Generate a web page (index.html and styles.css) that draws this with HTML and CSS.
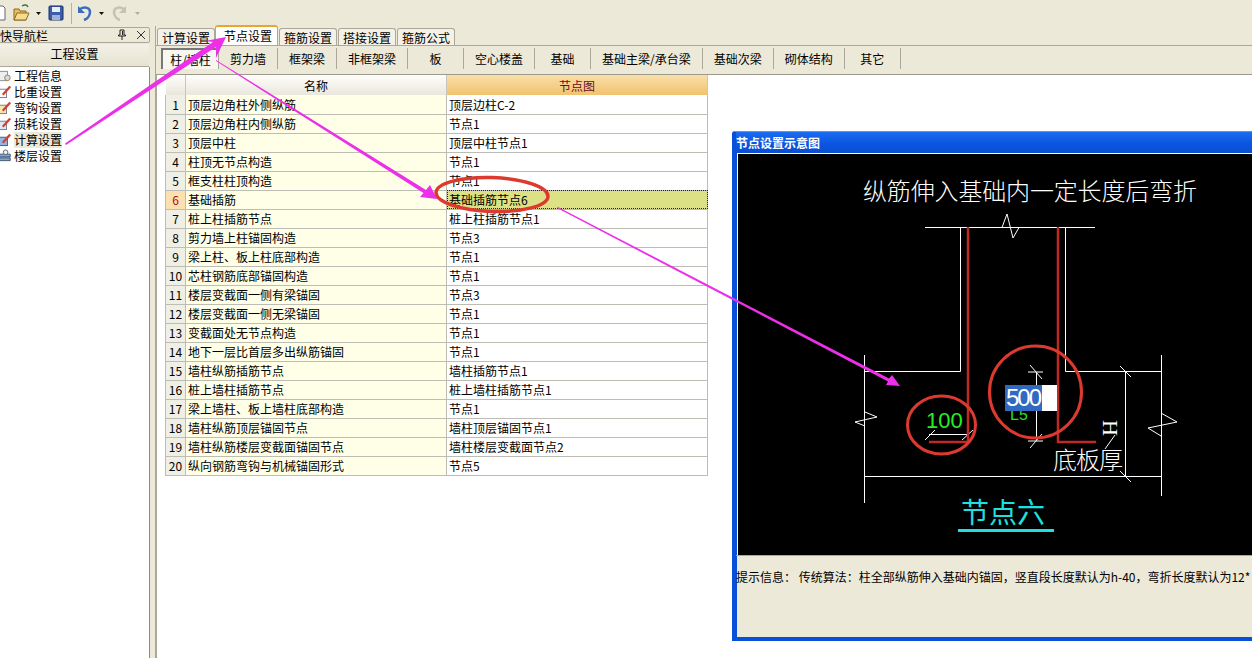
FILE: index.html
```html
<!DOCTYPE html>
<html lang="zh-CN">

<head>
  <meta charset="UTF-8">
  <title>节点设置</title>
  <link rel="stylesheet" href="styles.css">
</head>

<body>
  <div class="toolbar">
    <svg class="tool-icons" width="150" height="26" viewBox="0 0 150 26">
      <!-- new, clipped by the window edge -->
      <path d="M-4 6h7l2 2v12h-9z" fill="#fff" stroke="#667" />
      <!-- open -->
      <path d="M14 9h5l1 2h6v9H14z" fill="#e8bd5a" stroke="#8a6a20" />
      <path d="M14 20l3-7h12l-3 7z" fill="#f6dc8c" stroke="#8a6a20" />
      <path d="M22 6c3-2 5-1 6 1" fill="none" stroke="#3c7a2c" stroke-width="1.5" />
      <path d="M36 12h5l-2.500 3z" fill="#111" />
      <!-- save -->
      <rect x="49" y="6" width="14" height="14" rx="1" fill="#3c5ea8" stroke="#1d2f6a" />
      <rect x="52" y="7" width="8" height="5" fill="#e8eefa" />
      <rect x="52" y="15" width="8" height="5" fill="#9fb2d8" />
      <path d="M71.500 3v21" stroke="#b5b29f" />
      <!-- undo -->
      <path d="M80 9c5-3 10-1 10 3s-3 7-6 8" fill="none" stroke="#3a6cc0" stroke-width="2.500" />
      <path d="M78 6v7h7z" fill="#3a6cc0" />
      <path d="M99 12h5l-2.500 3z" fill="#111" />
      <!-- redo -->
      <path d="M124 9c-5-3-10-1-10 3s3 7 6 8" fill="none" stroke="#c4c2b4" stroke-width="2.500" />
      <path d="M126 6v7h-7z" fill="#c4c2b4" />
      <path d="M135 12h5l-2.500 3z" fill="#b0ae9f" />
    </svg>
  </div>

  <div class="workspace">
    <aside class="nav-panel">
      <div class="nav-title">
        <span class="nav-title-text">快导航栏</span>
        <svg class="pin" width="10" height="12" viewBox="0 0 10 12"><path d="M3 1h4v5h1.500v1h-7V6H3zM5 7v4" fill="none" stroke="#222" /><path d="M5.500 2v4" stroke="#222" /></svg>
        <svg class="close" width="10" height="10" viewBox="0 0 10 10"><path d="M1 1l8 8M9 1l-8 8" stroke="#333" /></svg>
      </div>
      <div class="nav-head">工程设置</div>
      <ul class="nav-list">
        <li class="nav-item"><svg class="nav-icon" viewBox="0 0 14 14"><rect x="-2" y="2" width="10" height="10" fill="#eee" stroke="#889" /><circle cx="8" cy="9" r="3" fill="#cde" stroke="#a67c30" /></svg>工程信息</li>
        <li class="nav-item"><svg class="nav-icon" viewBox="0 0 14 14"><rect x="-2" y="4" width="9" height="9" fill="#fff" stroke="#778" /><path d="M3 10L11 1" stroke="#d8402c" stroke-width="2.500" /></svg>比重设置</li>
        <li class="nav-item"><svg class="nav-icon" viewBox="0 0 14 14"><rect x="-2" y="4" width="9" height="9" fill="#f6e8b0" stroke="#778" /><path d="M3 10L11 1" stroke="#d8402c" stroke-width="2.500" /></svg>弯钩设置</li>
        <li class="nav-item"><svg class="nav-icon" viewBox="0 0 14 14"><rect x="-2" y="4" width="9" height="9" fill="#dfe8f6" stroke="#778" /><path d="M3 10L11 1" stroke="#d8402c" stroke-width="2.500" /></svg>损耗设置</li>
        <li class="nav-item nav-item-on"><svg class="nav-icon" viewBox="0 0 14 14"><rect x="-2" y="4" width="10" height="9" fill="#8fb6e6" stroke="#556" /><path d="M3 10L11 1" stroke="#d8402c" stroke-width="2.500" /></svg><span>计算设置</span></li>
        <li class="nav-item"><svg class="nav-icon" viewBox="0 0 14 14"><path d="M-2 5h13v3H-2zM-2 9h13v3H-2z" fill="#7ea4d8" stroke="#456" /><circle cx="6" cy="3" r="2.500" fill="#e8eef6" stroke="#567" /></svg>楼层设置</li>
      </ul>
    </aside>

    <div class="splitter"></div>

    <main class="main">
      <div class="tabs">
        <div class="tab">计算设置</div>
        <div class="tab tab-on">节点设置</div>
        <div class="tab">箍筋设置</div>
        <div class="tab">搭接设置</div>
        <div class="tab">箍筋公式</div>
      </div>

      <div class="tab-body">
        <div class="subtabs">
          <div class="subtab subtab-on">柱/墙柱</div>
          <div class="subtab">剪力墙</div>
          <div class="subtab">框架梁</div>
          <div class="subtab">非框架梁</div>
          <div class="subtab">板</div>
          <div class="subtab">空心楼盖</div>
          <div class="subtab">基础</div>
          <div class="subtab">基础主梁/承台梁</div>
          <div class="subtab">基础次梁</div>
          <div class="subtab">砌体结构</div>
          <div class="subtab">其它</div>
        </div>

        <table class="grid">
          <thead>
            <tr>
              <th class="col-no"></th>
              <th class="col-name">名称</th>
              <th class="col-node">节点图</th>
            </tr>
          </thead>
          <tbody>
            <tr><td class="no">1</td><td class="name">顶层边角柱外侧纵筋</td><td>顶层边柱C-2</td></tr>
            <tr><td class="no">2</td><td class="name">顶层边角柱内侧纵筋</td><td>节点1</td></tr>
            <tr><td class="no">3</td><td class="name">顶层中柱</td><td>顶层中柱节点1</td></tr>
            <tr><td class="no">4</td><td class="name">柱顶无节点构造</td><td>节点1</td></tr>
            <tr><td class="no">5</td><td class="name">框支柱柱顶构造</td><td>节点1</td></tr>
            <tr><td class="no no-on">6</td><td class="name">基础插筋</td><td class="cell-on">基础插筋节点6</td></tr>
            <tr><td class="no">7</td><td class="name">桩上柱插筋节点</td><td>桩上柱插筋节点1</td></tr>
            <tr><td class="no">8</td><td class="name">剪力墙上柱锚固构造</td><td>节点3</td></tr>
            <tr><td class="no">9</td><td class="name">梁上柱、板上柱底部构造</td><td>节点1</td></tr>
            <tr><td class="no">10</td><td class="name">芯柱钢筋底部锚固构造</td><td>节点1</td></tr>
            <tr><td class="no">11</td><td class="name">楼层变截面一侧有梁锚固</td><td>节点3</td></tr>
            <tr><td class="no">12</td><td class="name">楼层变截面一侧无梁锚固</td><td>节点1</td></tr>
            <tr><td class="no">13</td><td class="name">变截面处无节点构造</td><td>节点1</td></tr>
            <tr><td class="no">14</td><td class="name">地下一层比首层多出纵筋锚固</td><td>节点1</td></tr>
            <tr><td class="no">15</td><td class="name">墙柱纵筋插筋节点</td><td>墙柱插筋节点1</td></tr>
            <tr><td class="no">16</td><td class="name">桩上墙柱插筋节点</td><td>桩上墙柱插筋节点1</td></tr>
            <tr><td class="no">17</td><td class="name">梁上墙柱、板上墙柱底部构造</td><td>节点1</td></tr>
            <tr><td class="no">18</td><td class="name">墙柱纵筋顶层锚固节点</td><td>墙柱顶层锚固节点1</td></tr>
            <tr><td class="no">19</td><td class="name">墙柱纵筋楼层变截面锚固节点</td><td>墙柱楼层变截面节点2</td></tr>
            <tr><td class="no">20</td><td class="name">纵向钢筋弯钩与机械锚固形式</td><td>节点5</td></tr>
          </tbody>
        </table>
      </div>
    </main>
  </div>

  <section class="dialog">
    <div class="dialog-title">节点设置示意图</div>
    <!-- viewBox uses page coordinates so the drawing can be read against the screenshot -->
    <svg class="diagram" viewBox="738 154 520 401" width="520" height="401">
      <text class="cad-text" x="863" y="200" textLength="334">纵筋伸入基础内一定长度后弯折</text>

      <g class="cad-line">
        <path d="M925 227.500H1095" />
        <path d="M1002 227.500L1007 214L1013 238L1019 227.500" />
        <path d="M960.500 227V371.500H865M1065.500 227V371.500H1161.500" />
        <path d="M864.500 355V503M1161.500 355V496M865 476.500H1161" />
        <path d="M865 412L877 417L855 422L865 426" />
        <path d="M1161 413L1177 422L1148 428L1161 436" />
        <path d="M1125.500 371V476M1120 366L1131 377M1120 471L1131 482" />
        <path d="M1036.500 372V441M1028 372H1043M1030 365L1042 379M1028 441H1043M1030 448L1042 434" />
        <path d="M929 434.500H968M925 440L935 430M962 440L973 430" />
        <path d="M1115 435L1105 449" />
      </g>

      <g class="rebar">
        <path d="M968 227V442H929" />
        <path d="M1058 227V442H1096" />
      </g>

      <text class="cad-green" x="926" y="428">100</text>
      <text class="cad-green-small" x="1010" y="420">L5</text>
      <rect x="1005" y="385" width="52" height="26" fill="#fff" />
      <rect x="1005" y="385" width="37" height="26" fill="#3168c0" />
      <text class="cad-input" x="1006" y="406" textLength="36">500</text>
      <text class="cad-h" transform="translate(1103 428) rotate(90)" text-anchor="middle">H</text>
      <text class="cad-text" x="1053" y="469" textLength="70">底板厚</text>
      <text class="cad-title" x="961" y="523" textLength="84">节点六</text>
      <rect x="958" y="529" width="96" height="3" fill="#1fe0e0" />

      <ellipse class="mark" cx="941.500" cy="425" rx="34" ry="29" />
      <ellipse class="mark" cx="1035.500" cy="392" rx="46" ry="46" />
    </svg>
    <div class="dialog-info">提示信息： 传统算法：柱全部纵筋伸入基础内锚固，竖直段长度默认为h-40，弯折长度默认为12*</div>
  </section>

  <svg class="notes" width="1252" height="658" viewBox="0 0 1252 658">
    <ellipse class="mark mark-cell" cx="492" cy="194.500" rx="56" ry="17" transform="rotate(2 492 194.500)" />
    <g class="arrow">
      <polygon points="65,143.500 213,42 205,41 226,37 216,58 216,47 66,145" />
      <polygon points="216,60 426,190 430,185 437,199 420,197 423.500,193 216,61" />
      <polygon points="558,207 889,378.500 892,375 900,386 886,385 888,381.500 557,208" />
    </g>
  </svg>
</body>

</html>
```

FILE: styles.css
```css
* {
  box-sizing: border-box;
}

html,
body {
  margin: 0;
  height: 100%;
}

body {
  position: relative;
  width: 1252px;
  height: 658px;
  overflow: hidden;
  display: flex;
  flex-direction: column;
  background-color: #fff;
  color: #000;
  font-family: "Noto Sans CJK SC", "Liberation Sans", sans-serif;
  font-size: 12px;
}

.toolbar {
  height: 26px;
  flex: none;
  background-color: #ece9d8;
}

.tool-icons {
  display: block;
}

.workspace {
  flex: 1;
  display: flex;
  min-height: 0;
}

/* left panel */
.nav-panel {
  width: 150px;
  flex: none;
  display: flex;
  flex-direction: column;
  background-color: #ece9d8;
}

.nav-title {
  height: 16px;
  margin: 1px 0 1px -2px;
  padding-right: 3px;
  display: flex;
  align-items: center;
  gap: 9px;
  border: 1px solid #aca899;
  border-radius: 2px;
  line-height: 13px;
}

.nav-title-text {
  flex: 1;
  padding-left: 1px;
}

.nav-head {
  height: 23px;
  margin-right: 1px;
  line-height: 20px;
  text-align: center;
  background: linear-gradient(#f3f1e6, #e6e3d2);
  border-bottom: 1px solid #aca899;
}

.nav-list {
  flex: 1;
  list-style: none;
  margin: 0;
  padding: 1px 0 0;
  background-color: #fff;
  border-right: 1px solid #8e8c80;
}

.nav-item {
  height: 16px;
  line-height: 16px;
  display: flex;
  align-items: center;
  gap: 1px;
}

.nav-item-on span {
  background-color: #ece9d8;
}

.nav-icon {
  width: 13px;
  height: 14px;
  flex: none;
}

.splitter {
  width: 6px;
  flex: none;
  background-color: #ece9d8;
  border-right: 1px solid #aca899;
}

/* main area */
.main {
  flex: 1;
  min-width: 0;
  display: flex;
  flex-direction: column;
  background-color: #ece9d8;
}

.tabs {
  height: 19px;
  flex: none;
  display: flex;
  align-items: flex-end;
  gap: 1px;
  padding-left: 1px;
}

.tab {
  height: 17px;
  padding: 0 4px;
  line-height: 18px;
  background-color: #f4f2e8;
  border: 1px solid #aca899;
  border-bottom: 0;
  border-radius: 3px 3px 0 0;
}

.tab-on {
  height: 20px;
  padding: 0 5px 0 8px;
  margin: 0 0 0 -1px;
  line-height: 17px;
  background-color: #fff;
  border-top: 2px solid #eba52c;
  position: relative;
}

.tab-body {
  flex: 1;
  border-left: 1px solid #aca899;
  border-top: 1px solid #aca899;
  padding: 0 0 0 4px;
  background-color: #fff;
}

.subtabs {
  height: 29px;
  margin: 0 0 0 -5px;
  padding-left: 5px;
  display: flex;
  align-items: stretch;
  background-color: #ece9d8;
  border-bottom: 1px solid #9c9a8c;
  width: 1097px;
}

.subtab {
  min-width: 56px;
  padding: 0 11px;
  margin: 2px 0 5px;
  text-align: center;
  line-height: 21px;
  border-right: 1px solid #aca899;
  white-space: nowrap;
}

.subtab-on {
  width: 58px;
  min-width: 0;
  padding: 0;
  background-color: #f7f6ef;
  border-left: 2px solid #777;
  border-top: 2px solid #777;
  line-height: 19px;
}

.grid {
  border-collapse: collapse;
  table-layout: fixed;
  width: 543px;
  margin-left: 4px;
}

.grid th {
  height: 20px;
  padding: 0;
  font-weight: normal;
  text-align: center;
  border-right: 1px solid #c8c6ba;
  background: linear-gradient(#fdfdfa, #e9e7dc);
}

.grid .col-no {
  width: 20px;
}

.grid .col-name {
  width: 261px;
}

.grid .col-node {
  background: linear-gradient(#f9dfa8, #f2c26e);
  color: #6a0a2a;
}

.grid td {
  height: 19px;
  padding: 0 2px;
  line-height: 17px;
  white-space: nowrap;
  overflow: hidden;
  border-right: 1px solid #bdbdb5;
  border-bottom: 1px solid #bdbdb5;
}

.grid td.no {
  text-align: center;
  padding: 0;
  background-color: #f0efe6;
  border-left: 1px solid #bdbdb5;
}

.grid td.no-on {
  background-color: #fbe0b0;
  color: #b01010;
}

.grid td.name {
  background-color: #ffffe8;
}

.grid td.cell-on {
  background-color: #dbe184;
  outline: 1px dotted #222;
  outline-offset: -1px;
}

/* floating window */
.dialog {
  position: absolute;
  left: 732px;
  top: 131px;
  width: 530px;
  height: 510px;
  display: flex;
  flex-direction: column;
  background-color: #ece9d8;
  border: solid #0a4fd8;
  border-width: 1px 0 4px 5px;
  border-top-color: #5a94f0;
  border-radius: 3px 0 0 0;
}

.dialog-title {
  height: 21px;
  flex: none;
  margin-left: -1px;
  line-height: 22px;
  color: #fff;
  font-weight: bold;
  background: linear-gradient(#1a6cf0, #0a54e0 60%, #0a4fd0);
}

.diagram {
  display: block;
  flex: none;
  background-color: #000;
  border-top: 1px solid #fff;
  border-left: 1px solid #fff;
  box-sizing: content-box;
}

.dialog-info {
  margin: 0 0 0 -1px;
  padding-top: 13px;
  width: 520px;
  overflow: hidden;
  white-space: nowrap;
  line-height: 16px;
  border-top: 1px solid #aca899;
}

.cad-line path {
  fill: none;
  stroke: #fff;
  stroke-width: 1;
}

.rebar path {
  fill: none;
  stroke: #c02a22;
  stroke-width: 2.500;
}

.cad-text {
  fill: #fff;
  font-size: 24px;
  font-weight: 300;
}

.cad-title {
  fill: #1fe0e0;
  font-size: 28px;
}

.cad-green {
  fill: #22f022;
  font-family: "Liberation Sans", sans-serif;
  font-size: 22px;
}

.cad-green-small {
  fill: #22e022;
  font-family: "Liberation Sans", sans-serif;
  font-size: 16px;
}

.cad-input {
  fill: #fff;
  font-family: "Liberation Sans", sans-serif;
  font-size: 24px;
}

.cad-h {
  fill: #fff;
  font-family: "Liberation Serif", serif;
  font-size: 22px;
}

.mark {
  fill: none;
  stroke: #dc3a30;
  stroke-width: 3;
}

.mark-cell {
  stroke-width: 3.500;
}

/* hand drawn notes over the screenshot */
.notes {
  position: absolute;
  left: 0;
  top: 0;
  pointer-events: none;
}

.arrow polygon {
  fill: #ec2fe8;
}
```
